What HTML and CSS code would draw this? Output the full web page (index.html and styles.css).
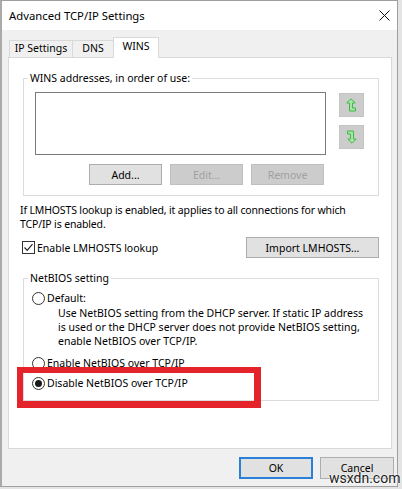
FILE: index.html
```html
<!DOCTYPE html>
<html>
<head>
<meta charset="utf-8">
<link rel="stylesheet" href="styles.css">
</head>
<body>
<div class="window">
  <div class="titlebar">
    <span class="title">Advanced TCP/IP Settings</span>
    <svg class="close" width="11" height="11" viewBox="0 0 11 11"><path d="M0.5 0.5 L10.5 10.5 M10.5 0.5 L0.5 10.5" stroke="#111" stroke-width="1" fill="none"/></svg>
  </div>
  <div class="tabs">
    <div class="tab tab-ip">IP Settings</div>
    <div class="tab tab-dns">DNS</div>
    <div class="tab tab-wins active">WINS</div>
  </div>
  <div class="panel">
    <fieldset class="group group-wins">
      <legend>WINS addresses, in order of use:</legend>
      <div class="wins-row">
        <div class="listbox"></div>
        <div class="arrows">
          <div class="arrow-btn">
            <svg width="11" height="14" viewBox="0 0 11 14"><path d="M5 0.8 L9.2 5 H6.5 V10 H9.5 V13 H3.5 V5 H0.8 Z" fill="#a6e6a2" stroke="#3dba48" stroke-width="1" stroke-linejoin="miter"/></svg>
          </div>
          <div class="arrow-btn">
            <svg width="11" height="14" viewBox="0 0 11 14"><path d="M6 13.2 L1.8 9 H4.5 V4 H1.5 V1 H7.5 V9 H10.2 Z" fill="#a6e6a2" stroke="#3dba48" stroke-width="1" stroke-linejoin="miter"/></svg>
          </div>
        </div>
      </div>
      <div class="btn-row">
        <div class="btn">Add...</div>
        <div class="btn disabled">Edit...</div>
        <div class="btn disabled">Remove</div>
      </div>
    </fieldset>
    <p class="note">If LMHOSTS lookup is enabled, it applies to all connections for which<br>TCP/IP is enabled.</p>
    <div class="lm-row">
      <div class="check-item">
        <span class="checkbox"><svg width="11" height="11" viewBox="0 0 11 11"><path d="M1.5 5.5 L4.2 8.3 L9.5 2.2" stroke="#222" stroke-width="1.2" fill="none"/></svg></span>
        <span>Enable LMHOSTS lookup</span>
      </div>
      <div class="btn btn-import">Import LMHOSTS...</div>
    </div>
    <fieldset class="group group-netbios">
      <legend>NetBIOS setting</legend>
      <div class="radio-row"><span class="radio"></span><span>Default:</span></div>
      <p class="desc">Use NetBIOS setting from the DHCP server. If static IP address<br>is used or the DHCP server does not provide NetBIOS setting,<br>enable NetBIOS over TCP/IP.</p>
      <div class="radio-row row-enable"><span class="radio"></span><span>Enable NetBIOS over TCP/IP</span></div>
      <div class="radio-row row-disable"><span class="radio checked"></span><span>Disable NetBIOS over TCP/IP</span></div>
    </fieldset>
    <div class="highlight"></div>
  </div>
  <div class="footer">
    <div class="btn btn-ok">OK</div>
    <div class="btn btn-cancel">Cancel</div>
  </div>
  <div class="watermark">wsxdn.com</div>
</div>
</body>
</html>
```
FILE: styles.css
```css
html, body {
  margin: 0;
  padding: 0;
}
body {
  background: #e4e4e4;
  font-family: "Noto Sans", "Open Sans", sans-serif;
  font-size: 10.5px;
  color: #000;
}
.window {
  position: relative;
  box-sizing: border-box;
  width: 398px;
  height: 487px;
  background: #f0f0f0;
  border: 1px solid #9f9f9f;
  border-left: 2px solid #aaaaaa;
}
.titlebar {
  height: 29px;
  background: #fff;
  display: flex;
  align-items: center;
  justify-content: space-between;
  padding: 0 7px 0 7px;
}
.title {
  font-size: 11.3px;
}
.close {
  display: block;
}
.tabs {
  display: flex;
  align-items: flex-end;
  height: 27px;
  padding-left: 7px;
}
.tab {
  box-sizing: border-box;
  height: 17px;
  border: 1px solid #d9d9d9;
  border-bottom: none;
  margin-right: -1px;
  text-align: center;
  line-height: 15px;
  background: #f0f0f0;
}
.tab-ip { width: 64px; }
.tab-dns { width: 42px; }
.tab-wins { width: 46px; }
.tab.active {
  height: 21px;
  margin-bottom: -1px;
  background: #fff;
  position: relative;
  z-index: 1;
  line-height: 17px;
}
.panel {
  position: relative;
  box-sizing: border-box;
  margin-left: 6px;
  width: 384px;
  height: 392px;
  background: #fff;
  border: 1px solid #d9d9d9;
}
.group {
  margin: 13px 12px 0 14px;
  border: 1px solid #dcdcdc;
  min-width: 0;
}
.group legend {
  padding: 0 2px;
  line-height: 15px;
}
.group-wins {
  padding: 6px 11px 10px 11px;
}
.group-wins legend {
  margin-left: -7px;
}
.wins-row {
  display: flex;
}
.listbox {
  box-sizing: border-box;
  width: 291px;
  height: 63px;
  border: 1px solid #7a7a7a;
  background: #fff;
}
.arrows {
  display: flex;
  flex-direction: column;
  gap: 8px;
  margin-left: 13px;
  margin-top: 1px;
}
.arrow-btn {
  box-sizing: border-box;
  width: 25px;
  height: 24px;
  background: #cccccc;
  border: 1px solid #c4c4c4;
  display: flex;
  align-items: center;
  justify-content: center;
}
.arrow-btn svg {
  display: block;
}
.btn-row {
  display: flex;
  gap: 8px;
  margin-top: 9px;
  padding-left: 54px;
}
.btn {
  box-sizing: border-box;
  width: 73px;
  height: 21px;
  background: #e1e1e1;
  border: 1px solid #adadad;
  display: flex;
  align-items: center;
  justify-content: center;
}
.btn.disabled {
  background: #cccccc;
  border-color: #bfbfbf;
  color: #a0a0a0;
}
.note {
  margin: 7px 0 0 11px;
  line-height: 14px;
  letter-spacing: -0.15px;
}
.lm-row {
  display: flex;
  align-items: center;
  justify-content: space-between;
  margin-top: 6px;
  padding: 0 12px 0 13px;
}
.check-item {
  display: flex;
  align-items: center;
  gap: 2px;
}
.checkbox {
  box-sizing: border-box;
  width: 13px;
  height: 13px;
  border: 1px solid #333;
  background: #fff;
  display: flex;
  align-items: center;
  justify-content: center;
}
.checkbox svg {
  display: block;
}
.btn-import {
  width: 133px;
}
.group-netbios {
  padding: 5px 11px 9px 8px;
}
.group-netbios legend {
  margin-left: -4px;
}
.radio-row {
  display: flex;
  align-items: center;
  gap: 2px;
  height: 15px;
  line-height: 15px;
}
.radio {
  box-sizing: border-box;
  width: 13px;
  height: 13px;
  border: 1px solid #333;
  border-radius: 50%;
  background: #fff;
  display: flex;
  align-items: center;
  justify-content: center;
}
.radio.checked::after {
  content: "";
  width: 7px;
  height: 7px;
  border-radius: 50%;
  background: #1a1a1a;
}
.desc {
  margin: 0 0 0 26px;
  line-height: 14px;
}
.row-enable {
  margin-top: 8px;
}
.row-disable {
  margin-top: 5px;
}
.highlight {
  position: absolute;
  left: 8px;
  top: 309px;
  box-sizing: border-box;
  width: 244px;
  height: 41px;
  border: solid #e4232b;
  border-width: 6px 7px 7px 6px;
}
.footer {
  display: flex;
  justify-content: flex-end;
  gap: 7px;
  margin-top: 8px;
  padding-right: 3px;
}
.footer .btn {
  width: 74px;
  height: 22px;
}
.btn-ok {
  border: 2px solid #2a7fd6;
}
.watermark {
  position: absolute;
  left: 327px;
  top: 470px;
  font-family: Roboto, "Liberation Sans", sans-serif;
  font-size: 14px;
  line-height: 14px;
  color: #1c1c1c;
  text-shadow: 0 0 2px #fff, 0 0 2px #fff;
}
```
